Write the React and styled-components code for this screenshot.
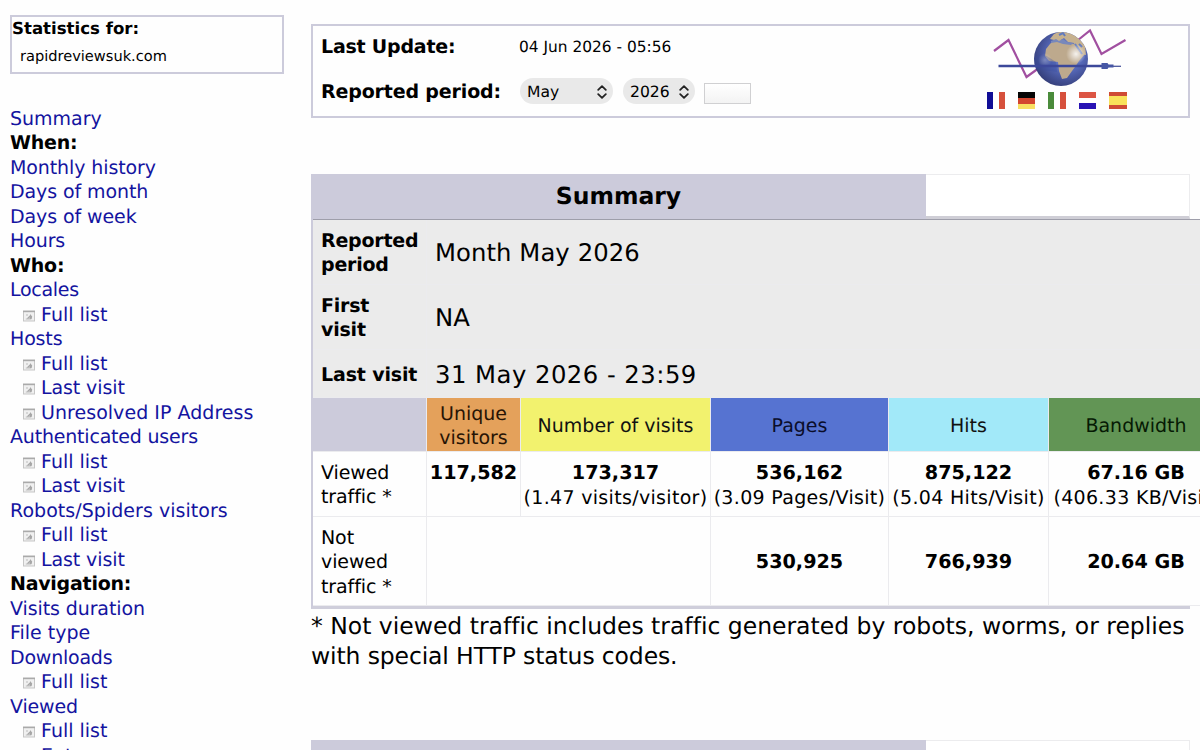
import React from "react";
import styled, { createGlobalStyle, css } from "styled-components";

const LILAC = "#cccbdb";

const GlobalStyle = createGlobalStyle`
  * { box-sizing: border-box; }
  html, body { margin: 0; height: 100%; overflow: hidden; }
  body {
    background: #fefefe;
    color: #000;
    font-family: "DejaVu Sans", Verdana, sans-serif;
    font-size: 19px;
    line-height: 24.5px;
    text-rendering: geometricPrecision;
    font-variant-ligatures: none;
  }
`;

const Page = styled.div`
  display: flex;
  width: 1200px;
  height: 750px;
  overflow: hidden;
`;

const Sidebar = styled.aside`
  flex: 0 0 311px;
  padding: 15px 0 0 10px;
`;

const SiteBox = styled.div`
  width: 274px;
  height: 59px;
  border: 2px solid ${LILAC};
  white-space: nowrap;
`;

const SiteLabel = styled.div`
  padding-top: 1px;
  font-size: 16.6px;
  font-weight: bold;
  line-height: 22px;
`;

const SiteName = styled.div`
  padding: 5.5px 0 0 8px;
  font-size: 14.6px;
  line-height: 22px;
`;

const Menu = styled.nav`
  margin-top: 32.6px;
  white-space: nowrap;
`;

const MenuHeading = styled.div`
  font-weight: bold;
  height: 24.5px;
  letter-spacing: ${(p) => p.$track || 0}px;
`;

const MenuLink = styled.div`
  display: flex;
  align-items: center;
  height: 24.5px;
  color: #1414a0;
  padding-left: ${(p) => (p.$sub ? "13px" : "0")};
  letter-spacing: ${(p) => p.$track || 0}px;
`;

const SubIcon = styled.svg`
  flex: none;
  width: 12px;
  height: 12px;
  margin: 1.5px 6px 0 0;
`;

const Content = styled.main`
  flex: 0 0 879px;
  width: 879px;
  min-width: 0;
  padding-top: 24px;
`;

const Banner = styled.header`
  display: flex;
  justify-content: space-between;
  height: 94px;
  border: 2px solid ${LILAC};
  padding-left: 8px;
`;

const BannerInfo = styled.div`
  display: grid;
  grid-template-columns: 198px auto;
  grid-template-rows: 43px 46px;
  align-items: center;
  white-space: nowrap;
`;

const BannerLabel = styled.div`
  font-weight: bold;
  letter-spacing: ${(p) => p.$track}px;
`;

const UpdateTime = styled.div`
  font-size: 15.4px;
`;

const Controls = styled.div`
  display: flex;
  align-items: center;
  margin: -2px 0 0 1px;
`;

const Select = styled.div`
  display: flex;
  align-items: center;
  justify-content: space-between;
  width: ${(p) => p.$width}px;
  height: 26px;
  margin-right: 10px;
  padding: 2px 6px 0 7px;
  border-radius: 13px;
  background: #e9e9e9;
  font-size: 15.6px;
`;

const GoButton = styled.div`
  width: 47px;
  height: 21px;
  margin: 5px 0 0 -1px;
  border: 1px solid #d0d0d2;
  background: linear-gradient(#fff, #f3f3f3);
`;

const Brand = styled.div`
  width: 204px;
  padding-top: 1px;
`;

const Flags = styled.div`
  display: flex;
  gap: 13px;
  margin: 2.5px 0 0 3px;
`;

const Flag = styled.div`
  width: 17.5px;
  height: 17.5px;
  background: linear-gradient(
    ${(p) => (p.$vertical ? "to right" : "to bottom")},
    ${(p) => p.$colors[0]} 0 ${(p) => p.$stops[0]}%,
    ${(p) => p.$colors[1]} ${(p) => p.$stops[0]}% ${(p) => p.$stops[1]}%,
    ${(p) => p.$colors[2]} ${(p) => p.$stops[1]}%
  );
`;

const TitleBar = styled.div`
  display: flex;
  height: 45px;
  margin-top: ${(p) => p.$gap}px;
`;

const Title = styled.h2`
  width: 615px;
  margin: 0;
  background: ${LILAC};
  font-size: 23.5px;
  line-height: 44px;
  text-align: center;
`;

const TitleBlank = styled.div`
  flex: 1;
  border: 1px solid #ececee;
  border-left: 0;
  border-bottom: 3px solid #cfced6;
  background: #fff;
`;

const Report = styled.section`
  border-left: 2px solid ${LILAC};
  border-bottom: 3px solid #cfcedb;
`;

const Grid = styled.div`
  display: grid;
  width: 911px;
  grid-template-columns: 114px 94px 190px 178px 160px 175px;
  grid-template-rows: 65px 65px 48px 54px 65px 89px;
  border-top: 1px solid #9e9eaa;
`;

const Cell = styled.div`
  display: flex;
  flex-direction: column;
  justify-content: center;
  border-right: 1px solid #ebebee;
  border-bottom: 1px solid #ebebee;
  padding-top: 3px;
  white-space: nowrap;
  letter-spacing: ${(p) => p.$track || 0}px;
  ${(p) => p.$span && css`grid-column: span ${p.$span};`}
`;

const LabelCell = styled(Cell)`
  padding-left: 8px;
  padding-top: 2.5px;
  font-weight: ${(p) => (p.$gray ? "bold" : "normal")};
  background: ${(p) => (p.$gray ? "#ebebeb" : "transparent")};
`;

const InfoCell = styled(Cell)`
  padding-left: 8px;
  background: #ebebeb;
  font-size: 24.3px;
`;

const HeadCell = styled(Cell)`
  align-items: center;
  padding-top: 3px;
  background: ${(p) => p.$color};
  color: ${(p) => p.$ink || "#111"};
`;

const ValueCell = styled(Cell)`
  align-items: center;
  justify-content: ${(p) => (p.$top ? "flex-start" : "center")};
  padding-top: ${(p) => (p.$top ? "9px" : "3px")};
`;

const Count = styled.div`
  font-weight: bold;
  font-size: 19.2px;
`;

const Ratio = styled.div`
  letter-spacing: 0.32px;
`;

const Note = styled.div`
  font-size: 23.5px;
  line-height: 29.5px;
  padding-top: 3px;
  white-space: nowrap;
`;

const NoteLine = styled.div`
  letter-spacing: ${(p) => p.$track}px;
`;

const Chevrons = () => (
  <svg width="10" height="14" viewBox="0 0 10 14" fill="none" stroke="#222" strokeWidth="1.8" strokeLinecap="round" strokeLinejoin="round">
    <path d="M1.200 4.800 5 1.200l3.800 3.600M1.200 9.200 5 12.800l3.800-3.600" />
  </svg>
);

const PageIcon = () => (
  <SubIcon viewBox="0 0 12 12">
    <rect x=".5" y="1" width="11" height="10" fill="#f0f0f0" stroke="#c6c6c6" />
    <path d="M0 1.500h12" stroke="#aaa" strokeWidth="1.400" />
    <path d="M3 5h2M2.800 9h5.500" stroke="#bcbcbc" />
    <path d="M4 8.200 7 5.200V4l2.200 2.400L8.600 9H6.400L7 7.200 5 9z" fill="#a6a6a6" />
  </SubIcon>
);

const LogoArt = styled.svg`
  display: block;
`;

const Logo = () => (
  <LogoArt width="144" height="62" viewBox="0 0 144 62">
    <defs>
      <radialGradient id="sea" cx=".6" cy=".4" r=".65">
        <stop offset="0" stopColor="#8294d2" />
        <stop offset=".5" stopColor="#5568b8" />
        <stop offset="1" stopColor="#343d78" />
      </radialGradient>
      <radialGradient id="shine">
        <stop offset="0" stopColor="#fff" stopOpacity=".85" />
        <stop offset="1" stopColor="#fff" stopOpacity="0" />
      </radialGradient>
      <clipPath id="ball"><circle cx="77" cy="32" r="27" /></clipPath>
    </defs>
    <g fill="none" stroke="#a14fa0" strokeWidth="2.200">
      <path d="M10 24 24.500 13 42.500 50 57 39.500" />
      <path d="M91 15.500 106 3.500 117.500 27 141.500 13" />
    </g>
    <circle cx="77" cy="32" r="27" fill="url(#sea)" />
    <g clipPath="url(#ball)">
      <path d="M66 17 70 13 79 13 81 16 91 17 97 27 101 27 95 34 91 40 88 44 83 51 78 52 75 44 74 35 65 34 61 29 62 22z" fill="#bda98d" />
      <path d="M66 12 70 7 77 4 86 6 94 10 101 18 102 28 98 27 96 23 91 20 90 16 84 15 80 11 75 14 70 13z" fill="#c6b18f" />
      <path d="M67 14l5-2 3 2 4-2 4 3 6 1-2 2-8-1-6-2-6 1z" fill="#7888bb" />
      <path d="M91 17l7 10M95 17l3 3M75 8l4-2 2 3" fill="none" stroke="#637bbd" strokeWidth="2" />
      <path d="M50 31c9-8 14 0 22 4l1 10c-9-2-14-1-23-3z" fill="#394c9e" opacity=".35" />
      <circle cx="92" cy="27" r="10" fill="url(#shine)" />
      <circle cx="61" cy="33" r="7" fill="url(#shine)" opacity=".35" />
    </g>
    <path d="M14.500 39H119" stroke="#3c489a" strokeWidth="2.400" />
    <path d="M117.500 36h6l1 1.500h5v3h-5l-1 1.500h-6z" fill="#4657a5" />
    <path d="M128 39.300h9" stroke="#4a579d" strokeWidth="1.300" />
  </LogoArt>
);

const MENU = [
  ["link", "Summary"],
  ["head", "When:", -0.2],
  ["link", "Monthly history", -0.1],
  ["link", "Days of month", -0.1],
  ["link", "Days of week", -0.1],
  ["link", "Hours", -0.1],
  ["head", "Who:", -0.2],
  ["link", "Locales", -0.3],
  ["sub", "Full list"],
  ["link", "Hosts", -0.15],
  ["sub", "Full list"],
  ["sub", "Last visit", -0.1],
  ["sub", "Unresolved IP Address", 0.04],
  ["link", "Authenticated users", -0.2],
  ["sub", "Full list"],
  ["sub", "Last visit", -0.1],
  ["link", "Robots/Spiders visitors", 0.04],
  ["sub", "Full list"],
  ["sub", "Last visit", -0.1],
  ["head", "Navigation:", -0.25],
  ["link", "Visits duration", -0.1],
  ["link", "File type"],
  ["link", "Downloads", -0.22],
  ["sub", "Full list"],
  ["link", "Viewed", -0.15],
  ["sub", "Full list"],
  ["sub", "Entry"],
];

const FLAGS = [
  { vertical: true, colors: ["#100d96", "#fff", "#d6503c"], stops: [34, 66] },
  { colors: ["#050505", "#d3452f", "#f8df62"], stops: [36, 72] },
  { vertical: true, colors: ["#4a8b3b", "#fff", "#d6503c"], stops: [34, 66] },
  { colors: ["#dc5544", "#fff", "#2913b4"], stops: [34, 66] },
  { colors: ["#cf4b34", "#f9e25a", "#cf4b34"], stops: [24, 76] },
];

export default function App() {
  return (
    <>
      <GlobalStyle />
      <Page>
        <Sidebar>
          <SiteBox>
            <SiteLabel>Statistics for:</SiteLabel>
            <SiteName>rapidreviewsuk.com</SiteName>
          </SiteBox>
          <Menu>
            {MENU.map(([kind, text, track], i) =>
              kind === "head" ? (
                <MenuHeading key={i} $track={track}>{text}</MenuHeading>
              ) : (
                <MenuLink key={i} $sub={kind === "sub"} $track={track}>
                  {kind === "sub" && <PageIcon />}
                  {text}
                </MenuLink>
              )
            )}
          </Menu>
        </Sidebar>
        <Content>
          <Banner>
            <BannerInfo>
              <BannerLabel $track={-0.22}>Last Update:</BannerLabel>
              <UpdateTime>04 Jun 2026 - 05:56</UpdateTime>
              <BannerLabel $track={-0.15}>Reported period:</BannerLabel>
              <Controls>
                <Select $width={93}>May<Chevrons /></Select>
                <Select $width={72}>2026<Chevrons /></Select>
                <GoButton />
              </Controls>
            </BannerInfo>
            <Brand>
              <Logo />
              <Flags>
                {FLAGS.map((f, i) => (
                  <Flag key={i} $vertical={f.vertical} $colors={f.colors} $stops={f.stops} />
                ))}
              </Flags>
            </Brand>
          </Banner>

          <TitleBar $gap={56}>
            <Title>Summary</Title>
            <TitleBlank />
          </TitleBar>
          <Report>
            <Grid>
              <LabelCell $gray $track={-0.22}><div>Reported<br />period</div></LabelCell>
              <InfoCell $span={5} $track={0.08}>Month May 2026</InfoCell>
              <LabelCell $gray $track={-0.2}><div>First<br />visit</div></LabelCell>
              <InfoCell $span={5}>NA</InfoCell>
              <LabelCell $gray $track={-0.15}>Last visit</LabelCell>
              <InfoCell $span={5} $track={0.48}>31 May 2026 - 23:59</InfoCell>

              <HeadCell $color={LILAC} />
              <HeadCell $color="#e4a15b" $ink="#281405"><div>Unique</div><div>visitors</div></HeadCell>
              <HeadCell $color="#f2f26e">Number of visits</HeadCell>
              <HeadCell $color="#5673d1" $ink="#0a0d2a">Pages</HeadCell>
              <HeadCell $color="#a2e9f9">Hits</HeadCell>
              <HeadCell $color="#629555" $ink="#061a04">Bandwidth</HeadCell>

              <LabelCell $track={-0.1}><div>Viewed<br />traffic *</div></LabelCell>
              <ValueCell $top><Count>117,582</Count></ValueCell>
              <ValueCell $top><Count>173,317</Count><Ratio>(1.47 visits/visitor)</Ratio></ValueCell>
              <ValueCell $top><Count>536,162</Count><Ratio>(3.09 Pages/Visit)</Ratio></ValueCell>
              <ValueCell $top><Count>875,122</Count><Ratio>(5.04 Hits/Visit)</Ratio></ValueCell>
              <ValueCell $top><Count>67.16 GB</Count><Ratio>(406.33 KB/Visit)</Ratio></ValueCell>

              <LabelCell $track={-0.1}><div>Not<br />viewed<br />traffic *</div></LabelCell>
              <ValueCell $span={2} />
              <ValueCell><Count>530,925</Count></ValueCell>
              <ValueCell><Count>766,939</Count></ValueCell>
              <ValueCell><Count>20.64 GB</Count></ValueCell>
            </Grid>
          </Report>
          <Note>
            <NoteLine $track={-0.01}>
              * Not viewed traffic includes traffic generated by robots, worms, or replies
            </NoteLine>
            <NoteLine $track={-0.13}>with special HTTP status codes.</NoteLine>
          </Note>
          <TitleBar $gap={69}>
            <Title />
            <TitleBlank />
          </TitleBar>
        </Content>
      </Page>
    </>
  );
}
